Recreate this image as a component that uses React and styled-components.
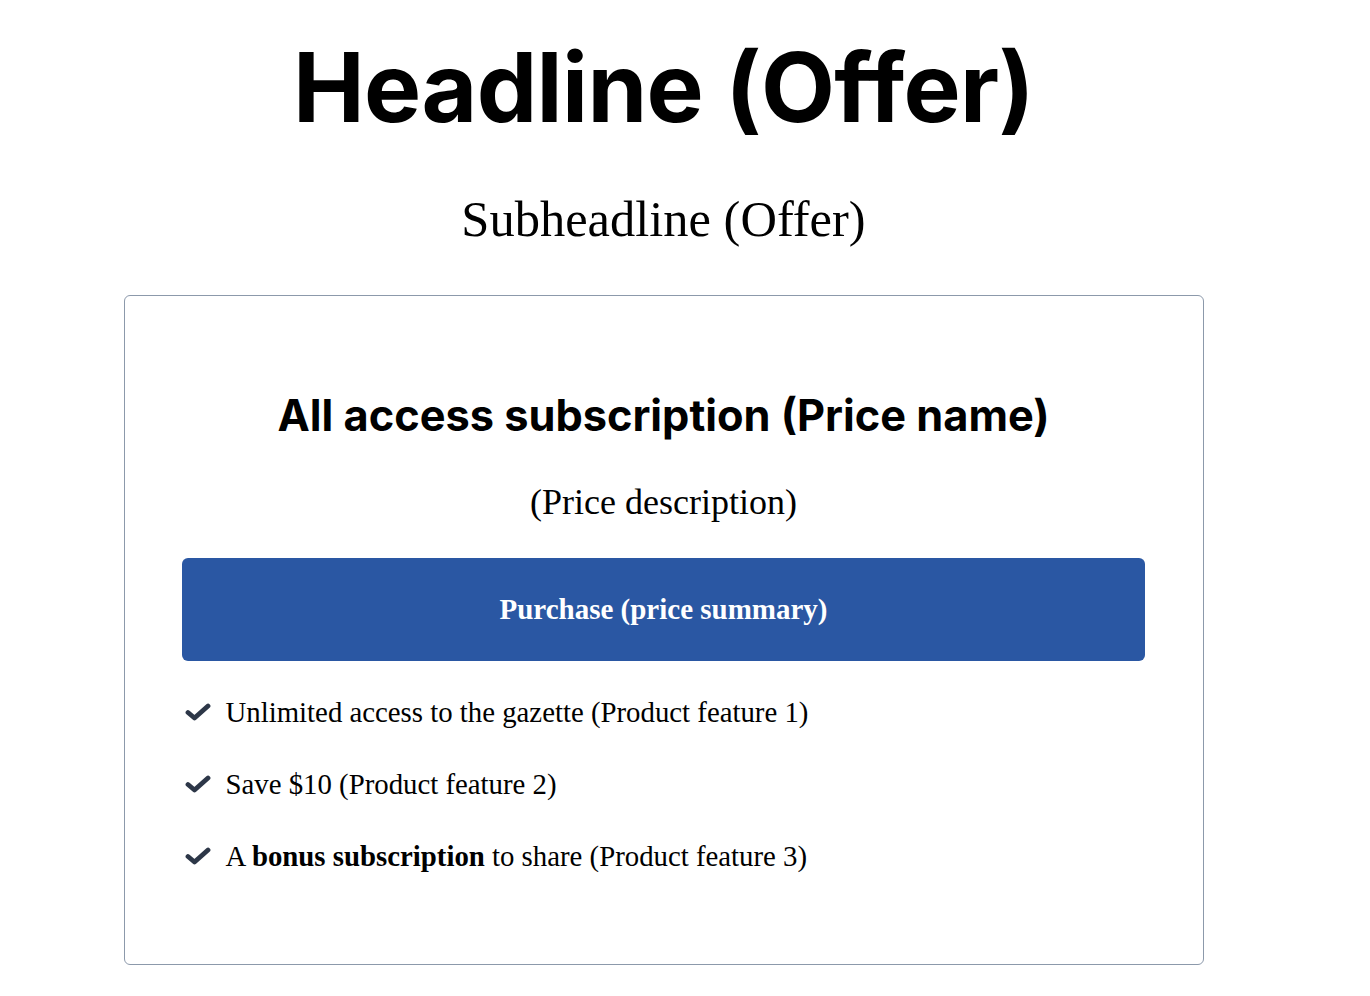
import React from "react";
import styled, { createGlobalStyle } from "styled-components";

const Global = createGlobalStyle`
  html, body { margin: 0; padding: 0; background: #ffffff; }
  body { font-family: "Liberation Serif", "Times New Roman", serif; color: #000; }
`;

const Page = styled.main`
  width: 1327px;
  padding-top: 29px;
  display: flex;
  flex-direction: column;
  align-items: center;
`;

const Headline = styled.h1`
  margin: 0;
  font-family: Inter, "Liberation Sans", sans-serif;
  font-weight: 700;
  font-size: 96px;
  line-height: 116px;
  letter-spacing: -0.6px;
`;

const Subheadline = styled.p`
  margin: 46px 0 0;
  font-family: "Liberation Serif", serif;
  font-size: 50.5px;
  line-height: 56px;
`;

const Card = styled.section`
  margin-top: 48px;
  width: 1080px;
  box-sizing: border-box;
  border: 1px solid #8c99ab;
  border-radius: 6px;
  padding: 93px 57px 92px;
  display: flex;
  flex-direction: column;
  align-items: center;
`;

const PriceName = styled.h2`
  margin: 0;
  font-family: Inter, "Liberation Sans", sans-serif;
  font-weight: 700;
  font-size: 43.3px;
  line-height: 52px;
  letter-spacing: 0;
`;

const PriceDesc = styled.p`
  margin: 41px 0 0;
  font-size: 36px;
  line-height: 40px;
`;

const PurchaseButton = styled.button`
  margin-top: 36px;
  width: 963px;
  height: 103px;
  border: none;
  border-radius: 6px;
  background: #2a57a3;
  color: #ffffff;
  font-family: "Liberation Serif", serif;
  font-weight: 700;
  font-size: 29px;
  cursor: pointer;
`;

const Features = styled.ul`
  list-style: none;
  margin: 35px 0 0;
  padding: 0 0 0 3px;
  align-self: stretch;
  display: flex;
  flex-direction: column;
  gap: 40px;
`;

const Feature = styled.li`
  display: flex;
  align-items: center;
  gap: 15px;
  font-size: 28.8px;
  line-height: 32px;
`;

const CheckSvg = styled.svg`
  width: 26px;
  height: 18px;
  flex: none;
  color: #2d3748;
`;

const Check = () => (
  <CheckSvg viewBox="0 0 26 18">
    <polyline
      points="3,9.5 9.5,15 23,3"
      fill="none"
      stroke="currentColor"
      strokeWidth="4.8"
      strokeLinecap="round"
      strokeLinejoin="round"
    />
  </CheckSvg>
);

export default function App() {
  return (
    <>
      <Global />
      <Page>
        <Headline>Headline (Offer)</Headline>
        <Subheadline>Subheadline (Offer)</Subheadline>
        <Card>
          <PriceName>All access subscription (Price name)</PriceName>
          <PriceDesc>(Price description)</PriceDesc>
          <PurchaseButton>Purchase (price summary)</PurchaseButton>
          <Features>
            <Feature>
              <Check />
              <span>Unlimited access to the gazette (Product feature 1)</span>
            </Feature>
            <Feature>
              <Check />
              <span>Save $10 (Product feature 2)</span>
            </Feature>
            <Feature>
              <Check />
              <span>
                A <b>bonus subscription</b> to share (Product feature 3)
              </span>
            </Feature>
          </Features>
        </Card>
      </Page>
    </>
  );
}
